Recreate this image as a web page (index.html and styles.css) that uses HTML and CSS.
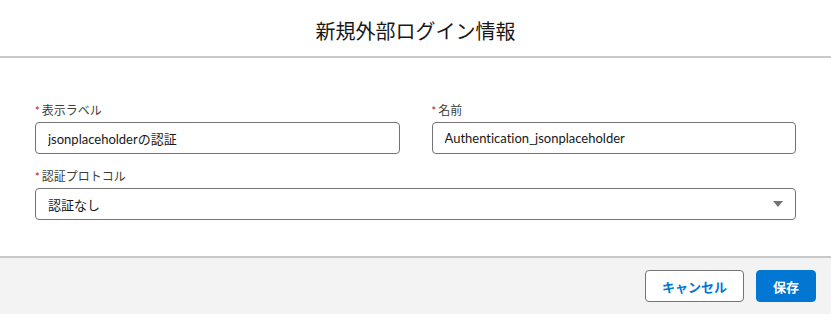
FILE: index.html
```html
<!DOCTYPE html>
<html lang="ja">
<head>
    <meta charset="UTF-8">
    <title>新規外部ログイン情報</title>
    <link rel="stylesheet" href="styles.css">
</head>
<body>
    <div class="modal">
        <div class="modal-header">
            <h2>新規外部ログイン情報</h2>
        </div>
        <div class="modal-body">
            <div class="row">
                <div class="field">
                    <label><abbr>*</abbr>表示ラベル</label>
                    <input type="text" value="jsonplaceholderの認証">
                </div>
                <div class="field">
                    <label><abbr>*</abbr>名前</label>
                    <input type="text" value="Authentication_jsonplaceholder">
                </div>
            </div>
            <div class="field">
                <label><abbr>*</abbr>認証プロトコル</label>
                <div class="select">
                    <span>認証なし</span>
                    <svg width="10" height="6" viewBox="0 0 10 6"><path d="M0 0h10L5 6z" fill="#747474"/></svg>
                </div>
            </div>
        </div>
        <div class="modal-footer">
            <button class="btn-neutral">キャンセル</button>
            <button class="btn-brand">保存</button>
        </div>
    </div>
</body>
</html>
```

FILE: styles.css
```css
body {
    margin: 0;
    background-color: #ffffff;
    font-family: Lato, "Noto Sans CJK JP", sans-serif;
    font-variant-ligatures: none;
    color: #181818;
}
.modal {
    display: flex;
    flex-direction: column;
    height: 314px;
}
.modal-header {
    height: 56px;
    display: flex;
    align-items: center;
    justify-content: center;
    border-bottom: 2px solid #c9c9c9;
}
.modal-header h2 {
    margin: 0;
    font-family: "Noto Sans CJK JP", sans-serif;
    font-size: 20px;
    font-weight: 400;
    color: #181818;
    padding-top: 4px;
}
.modal-body {
    padding: 44px 35px 0;
    height: 154px;
}
.row {
    display: grid;
    grid-template-columns: 1fr 1fr;
    gap: 32px;
    margin-bottom: 14px;
}
.field {
    display: flex;
    flex-direction: column;
}
.field label {
    font-size: 12px;
    line-height: 18px;
    color: #3e3e3c;
    margin-bottom: 2px;
}
.field label abbr {
    color: #ba0517;
    font-size: 11px;
    margin-right: 2px;
    text-decoration: none;
}
.field input,
.select {
    height: 32px;
    box-sizing: border-box;
    border: 1px solid #747474;
    border-radius: 4px;
    padding: 0 12px;
    font-family: inherit;
    font-variant-ligatures: none;
    font-size: 13px;
    color: #181818;
}
.select {
    display: flex;
    align-items: center;
    justify-content: space-between;
}
.modal-footer {
    flex: 1;
    background-color: #f3f3f3;
    border-top: 2px solid #c9c9c9;
    display: flex;
    justify-content: flex-end;
    align-items: flex-start;
    gap: 12px;
    padding: 12px 15px 0;
}
.modal-footer button {
    height: 32px;
    box-sizing: border-box;
    border-radius: 4px;
    font-family: "Noto Sans CJK JP", sans-serif;
    font-size: 13px;
    font-weight: 700;
    cursor: pointer;
}
.btn-neutral {
    width: 99px;
    background-color: #ffffff;
    border: 1px solid #747474;
    color: #0176d3;
}
.btn-brand {
    width: 60px;
    background-color: #0176d3;
    border: 1px solid #0176d3;
    color: #ffffff;
}
```
